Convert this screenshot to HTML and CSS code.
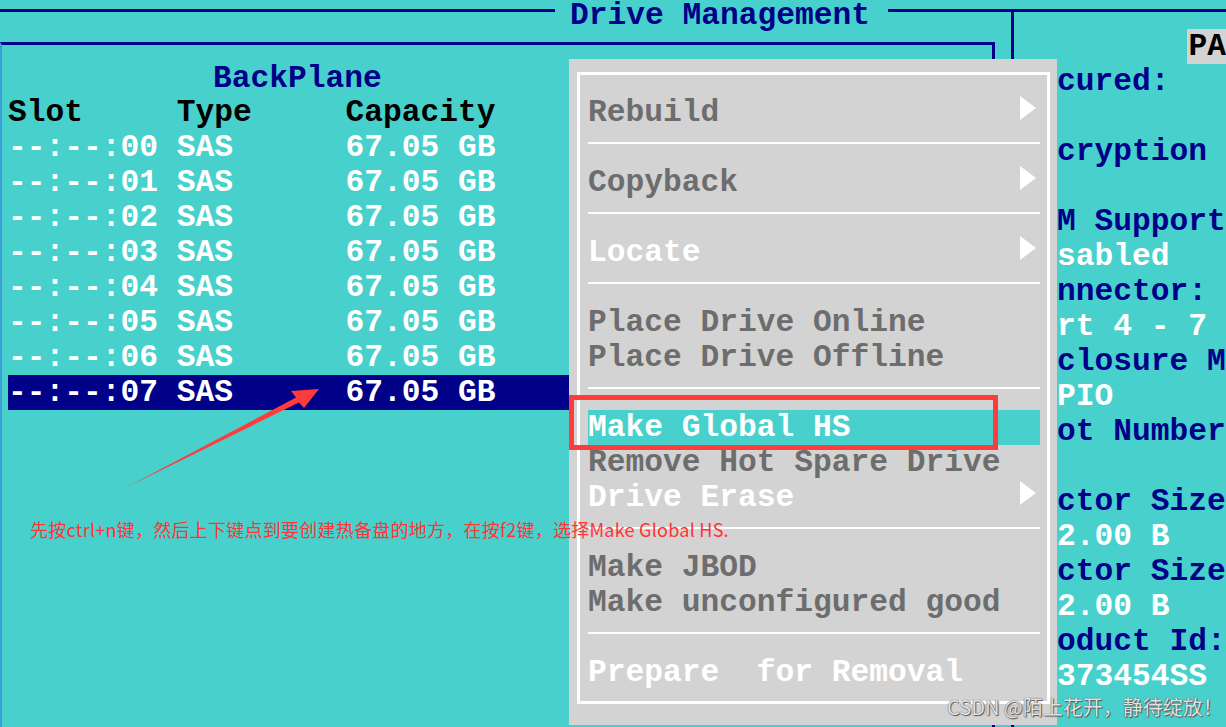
FILE: index.html
```html
<!DOCTYPE html>
<html lang="zh-CN">
<head>
    <meta charset="UTF-8">
    <meta name="viewport" content="width=device-width, initial-scale=1.0">
    <title>Drive Management</title>
    <link rel="stylesheet" href="styles.css">
</head>
<body>
    <div class="screen">
        <div class="left">
            <div class="titlebar">
                <span class="rule rule-a"></span>
                <span class="title">Drive Management</span>
                <span class="rule rule-b"></span>
            </div>
            <div class="panel">
                <div class="panel-head">BackPlane</div>
                <div class="drive head"><span class="c1">Slot</span><span class="c2">Type</span><span>Capacity</span></div>
                <div class="drive"><span class="c1">--:--:00</span><span class="c2">SAS</span><span>67.05 GB</span></div>
                <div class="drive"><span class="c1">--:--:01</span><span class="c2">SAS</span><span>67.05 GB</span></div>
                <div class="drive"><span class="c1">--:--:02</span><span class="c2">SAS</span><span>67.05 GB</span></div>
                <div class="drive"><span class="c1">--:--:03</span><span class="c2">SAS</span><span>67.05 GB</span></div>
                <div class="drive"><span class="c1">--:--:04</span><span class="c2">SAS</span><span>67.05 GB</span></div>
                <div class="drive"><span class="c1">--:--:05</span><span class="c2">SAS</span><span>67.05 GB</span></div>
                <div class="drive"><span class="c1">--:--:06</span><span class="c2">SAS</span><span>67.05 GB</span></div>
                <div class="drive sel"><span class="c1">--:--:07</span><span class="c2">SAS</span><span>67.05 GB</span></div>
            </div>
        </div>
        <!-- свойства диска, большая часть закрыта меню -->
        <div class="right">
            <div class="prop"><span class="tab">PA</span></div>
            <div class="prop key">Secured:</div>
            <div class="prop"></div>
            <div class="prop key">Encryption</div>
            <div class="prop"></div>
            <div class="prop key">EKM Support</div>
            <div class="prop">Disabled</div>
            <div class="prop key">Connector:</div>
            <div class="prop">Port 4 - 7</div>
            <div class="prop key">Enclosure M</div>
            <div class="prop">SGPIO</div>
            <div class="prop key">Slot Number</div>
            <div class="prop"></div>
            <div class="prop key">Sector Size</div>
            <div class="prop">512.00 B</div>
            <div class="prop key">Sector Size</div>
            <div class="prop">512.00 B</div>
            <div class="prop key">Product Id:</div>
            <div class="prop">ST373454SS</div>
        </div>
    </div>

    <!-- всплывающее меню F2 -->
    <div class="menu">
        <div class="menu-inner">
            <div class="item sub">Rebuild</div>
            <div class="sep"></div>
            <div class="item sub">Copyback</div>
            <div class="sep"></div>
            <div class="item on sub">Locate</div>
            <div class="sep"></div>
            <div class="item">Place Drive Online</div>
            <div class="item">Place Drive Offline</div>
            <div class="sep"></div>
            <div class="item hl">Make Global HS</div>
            <div class="item">Remove Hot Spare Drive</div>
            <div class="item on sub">Drive Erase</div>
            <div class="sep"></div>
            <div class="item">Make JBOD</div>
            <div class="item">Make unconfigured good</div>
            <div class="sep"></div>
            <div class="item on">Prepare  for Removal</div>
        </div>
    </div>

    <div class="mark-box"></div>
    <svg class="mark-arrow" width="1226" height="727" viewBox="0 0 1226 727">
        <polygon points="127,487 296,397.5 291,391 319,389 304,408 299,402.5" fill="#ff3b3b"/>
    </svg>
    <p class="note">先按ctrl+n键，然后上下键点到要创建热备盘的地方，在按f2键，选择Make Global HS.</p>
    <div class="watermark">CSDN @陌上花开，静待绽放！</div>
</body>
</html>
```
FILE: styles.css
```css
body {
    margin: 0;
    width: 1226px;
    height: 727px;
    overflow: hidden;
    position: relative;
    background: #48d1cc;
    font-family: "Liberation Mono", monospace;
    font-size: 31.25px;
    font-weight: bold;
    line-height: 35px;
    color: #fff;
}

.screen {
    display: flex;
    height: 727px;
}

.left {
    width: 1011px;
    flex-shrink: 0;
    display: flex;
    flex-direction: column;
}

.titlebar {
    display: flex;
    align-items: flex-start;
    height: 42px;
}

.rule {
    height: 3px;
    margin-top: 9px;
    background: #000088;
}

.rule-a {
    width: 555px;
}

.rule-b {
    flex: 1;
}

.title {
    padding: 0 18px 0 15px;
    line-height: 32px;
    color: #000088;
    white-space: pre;
}

/* левая панель со списком дисков */
.panel {
    flex: 1;
    width: 995px;
    box-sizing: border-box;
    border-top: 3px solid #000088;
    border-right: 3px solid #000088;
    border-left: 2px solid #3c9ed6;
    padding: 17.5px 6px 0 6px;
}

.panel-head {
    padding-left: 205px;
    line-height: 32px;
    color: #000088;
}

.drive {
    display: flex;
    height: 35px;
    white-space: pre;
}

.drive .c1,
.drive .c2 {
    width: 9ch;
}

.drive.head {
    color: #000;
}

.drive.sel {
    background: #000088;
}

/* правая панель */
.right {
    flex: 1;
    margin-top: 9px;
    border-top: 3px solid #000088;
    border-left: 3px solid #000088;
    padding: 17px 0 0 5.5px;
    overflow: hidden;
}

.prop {
    height: 35px;
    white-space: pre;
}

.prop.key {
    color: #000088;
}

.tab {
    display: inline-block;
    margin-left: 167px;
    padding: 0 1px 0 2px;
    background: #d3d3d3;
    color: #000;
}

/* меню */
.menu {
    position: absolute;
    left: 569px;
    top: 59px;
    width: 488px;
    height: 666px;
    background: #d3d3d3;
    display: flex;
    z-index: 2;
}

.menu-inner {
    flex: 1;
    margin: 13px 7px 21px 8px;
    border: 3px solid #fff;
    padding: 19.5px 7px 0 8px;
}

.item {
    display: flex;
    justify-content: space-between;
    height: 35px;
    color: #6d6d6d;
    white-space: pre;
}

.item.on {
    color: #fff;
}

.item.hl {
    background: #48d1cc;
    color: #fff;
}

.item.sub::after {
    content: "";
    width: 0;
    height: 0;
    margin: 1px 4px 0 0;
    border-left: 16px solid #fff;
    border-top: 12px solid transparent;
    border-bottom: 12px solid transparent;
}

.sep {
    height: 35px;
    box-sizing: border-box;
    padding-top: 12px;
}

.sep::before {
    content: "";
    display: block;
    height: 2px;
    background: #fff;
}

/* пометки поверх скриншота */
.mark-box {
    position: absolute;
    left: 569px;
    top: 395px;
    width: 429px;
    height: 55px;
    box-sizing: border-box;
    border: 5px solid #ff3b3b;
    z-index: 3;
}

.mark-arrow {
    position: absolute;
    left: 0;
    top: 0;
    z-index: 3;
    pointer-events: none;
}

.note {
    position: absolute;
    left: 30px;
    top: 518px;
    margin: 0;
    font-family: "Noto Sans CJK SC", sans-serif;
    font-size: 18px;
    font-weight: normal;
    letter-spacing: 0.25px;
    line-height: 22px;
    color: #ff3434;
    white-space: nowrap;
    z-index: 3;
}

.watermark {
    position: absolute;
    left: 947px;
    top: 695px;
    font-family: "Noto Sans CJK SC", sans-serif;
    font-size: 20px;
    font-weight: normal;
    line-height: 24px;
    color: #e2e2e2;
    text-shadow: 1px 1px 1px #555, 0 0 1px #333;
    white-space: nowrap;
    z-index: 4;
}
```
